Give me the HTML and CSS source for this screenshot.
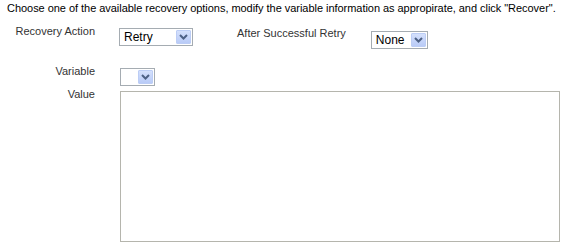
FILE: index.html
```html
<!DOCTYPE html>
<html lang="en">
<head>
  <meta charset="UTF-8" />
  <title>Recover</title>
  <link rel="stylesheet" href="styles.css">
</head>
<body>
  <p class="intro">Choose one of the available recovery options, modify the variable information as appropirate, and click "Recover".</p>
  <div class="row row-action">
    <label class="field-label">Recovery Action</label>
    <div class="combo combo-action">
      <span class="combo-text">Retry</span>
      <span class="combo-btn"><svg width="9" height="6" viewBox="0 0 9 6"><path d="M1 1 L4.5 4.5 L8 1" fill="none" stroke="#4d6185" stroke-width="2"/></svg></span>
    </div>
    <label class="field-label after-label">After Successful Retry</label>
    <div class="combo combo-after">
      <span class="combo-text">None</span>
      <span class="combo-btn"><svg width="9" height="6" viewBox="0 0 9 6"><path d="M1 1 L4.5 4.5 L8 1" fill="none" stroke="#4d6185" stroke-width="2"/></svg></span>
    </div>
  </div>
  <div class="row row-variable">
    <label class="field-label">Variable</label>
    <div class="combo combo-variable">
      <span class="combo-text"></span>
      <span class="combo-btn"><svg width="9" height="6" viewBox="0 0 9 6"><path d="M1 1 L4.5 4.5 L8 1" fill="none" stroke="#4d6185" stroke-width="2"/></svg></span>
    </div>
  </div>
  <div class="row row-value">
    <label class="field-label">Value</label>
    <textarea class="value-box"></textarea>
  </div>
</body>
</html>
```

FILE: styles.css
```css
body {
  margin: 0;
  font-family: "Liberation Sans", Arial, sans-serif;
  font-size: 11px;
  color: #000;
  background: #fff;
}

.intro {
  margin: 0;
  padding: 2px 0 0 7px;
  line-height: 13px;
  letter-spacing: -0.04px;
}

.row {
  display: flex;
  align-items: flex-start;
}

.field-label {
  width: 87px;
  padding-left: 8px;
  text-align: right;
  color: #333;
  line-height: 13px;
}

.row-action {
  margin-top: 10px;
}

.after-label {
  width: auto;
  padding-left: 0;
  margin-left: 44px;
  padding-top: 2px;
}

.combo {
  display: flex;
  align-items: center;
  justify-content: space-between;
  height: 14px;
  padding: 1px;
  border: 1px solid #a5acb2;
  background: #fff;
}

.combo-text {
  padding-left: 3px;
  font-size: 12px;
  line-height: 14px;
}

.combo-btn {
  display: flex;
  align-items: center;
  justify-content: center;
  width: 15px;
  height: 14px;
  box-sizing: border-box;
  border: 1px solid #bccdf5;
  border-radius: 1px;
  background: linear-gradient(#d4e0fc, #b9cbf7);
}

.combo-action {
  margin: 3px 0 0 24px;
  width: 70px;
}

.combo-after {
  margin: 6px 0 0 25px;
  width: 53px;
}

.row-variable {
  margin-top: 16px;
}

.combo-variable {
  margin: 3px 0 0 25px;
  width: 31px;
}

.row-value {
  margin-top: 2px;
}

.value-box {
  margin: 3px 0 0 25px;
  width: 440px;
  height: 151px;
  box-sizing: border-box;
  border: 1px solid #b5b5ad;
  resize: none;
  padding: 0;
}
```
